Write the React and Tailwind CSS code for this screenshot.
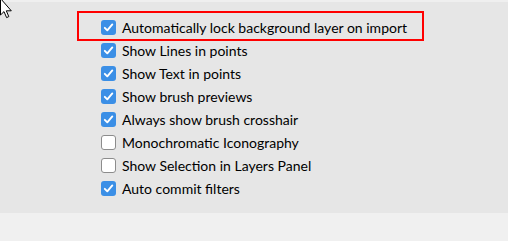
import React from "react";

const options = [
  { label: "Automatically lock background layer on import", checked: true, highlight: true },
  { label: "Show Lines in points", checked: true },
  { label: "Show Text in points", checked: true },
  { label: "Show brush previews", checked: true },
  { label: "Always show brush crosshair", checked: true },
  { label: "Monochromatic Iconography", checked: false },
  { label: "Show Selection in Layers Panel", checked: false },
  { label: "Auto commit filters", checked: true },
];

const Checkbox = ({ checked }) =>
  checked ? (
    <span className="flex h-[15px] w-[15px] shrink-0 items-center justify-center rounded-[3px] bg-[#3b8fe6]">
      <svg width="11" height="11" viewBox="0 0 11 11">
        <path d="M1.8 5.8 L4.3 8.3 L9.3 2.4" fill="none" stroke="#fff" strokeWidth="1.9" strokeLinecap="round" strokeLinejoin="round" />
      </svg>
    </span>
  ) : (
    <span className="h-[15px] w-[15px] shrink-0 rounded-[3px] border border-[#8c8c8c] bg-white" />
  );

const Cursor = () => (
  <svg className="absolute left-0 top-0" width="14" height="22" viewBox="0 0 14 22">
    <path d="M0.5 -1.5 L0.5 15 L4 11.6 L6.6 17.6 L8.8 16.6 L6.3 10.8 L11.3 10.8 Z" fill="#fff" stroke="#000" strokeWidth="1" strokeLinejoin="miter" />
  </svg>
);

export default function App() {
  return (
    <div className="relative flex h-[241px] w-[508px] flex-col bg-[#f0f0f0] font-['Lato',sans-serif] text-[14px] text-[#000]">
      <div className="h-[2px] bg-[#efefef]" />
      <div className="flex h-[211px] flex-col bg-[#e6e6e6] pl-[101px] pt-[14px]">
        {options.map((o) => (
          <div key={o.label} className="relative flex h-[23px] items-center gap-[6px]">
            {o.highlight && (
              <div className="absolute -left-[24px] -top-[5px] h-[30px] w-[347px] border-2 border-[#ff0000]" />
            )}
            <Checkbox checked={o.checked} />
            <span className="whitespace-nowrap leading-none">{o.label}</span>
          </div>
        ))}
      </div>
      <Cursor />
    </div>
  );
}
